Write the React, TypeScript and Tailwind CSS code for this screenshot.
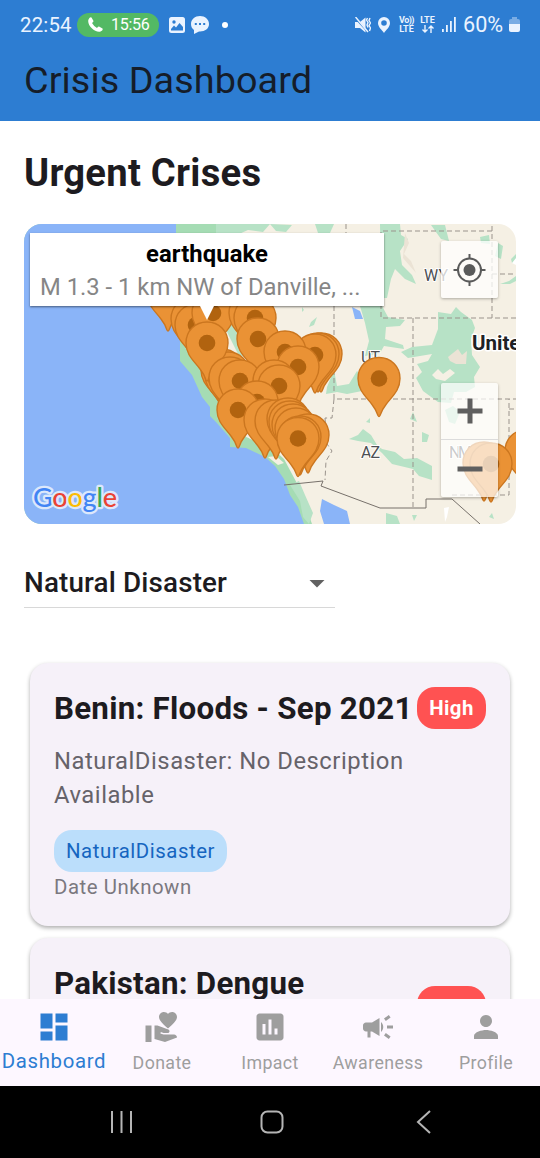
import type { ReactNode } from "react";
import {
  MdArrowDropDown,
  MdCampaign,
  MdDashboard,
  MdInsertChart,
  MdPerson,
  MdVolunteerActivism,
} from "react-icons/md";

const GREEN = "#b7e2c6";

const californiaPins: [number, number][] = [
  [168, 292],
  [192, 318],
  [196, 324],
  [213, 312],
  [250, 312],
  [255, 317],
  [258, 338],
  [321, 353],
  [318, 353],
  [315, 354],
  [285, 351],
  [298, 366],
  [222, 369],
  [226, 374],
  [228, 372],
  [207, 342],
  [230, 377],
  [240, 380],
  [274, 380],
  [279, 385],
  [257, 401],
  [238, 409],
  [265, 419],
  [276, 420],
  [288, 418],
  [290, 421],
  [293, 424],
  [296, 428],
  [308, 434],
  [300, 436],
  [298, 437.5],
];

const newMexicoPins: [number, number][] = [
  [526, 450],
  [484, 462],
  [491, 463],
];

function Pin({ x, y }: { x: number; y: number }) {
  return (
    <g transform={`translate(${x} ${y})`}>
      <path
        d="M0-21C-12-21-21-12-21 0C-21 12-13 18-7 26C-3 31-2 34-1 37Q0 39 1 37C2 34 3 31 7 26C13 18 21 12 21 0C21-12 12-21 0-21Z"
        fill="#ea9235"
        stroke="#cb761f"
        strokeWidth="1.4"
      />
      <circle r="8.3" fill="#b1630f" />
    </g>
  );
}

function MapCanvas() {
  return (
    <svg viewBox="24 223 492 300" className="block h-[300px] w-[492px]" fontFamily="Roboto, sans-serif">
      <rect x="24" y="223" width="492" height="300" fill="#f5f0e4" />
      {/* ocean and coast */}
      <path d="M24 223H216V300L206 330L218 370L230 410L246 436L270 445L284 458L300 488L312 523H24Z" fill="#a5dcb4" />
      <path d="M24 223H176V305L173 326L180 337V360L192 374L202 396L210 406V415L216 421L230 437V446L246 447L265 456L275 465L284 478L290 494L298 506L304 523H24Z" fill="#8ab4f8" />
      <path d="M299 480L305 494L313 512L309 523L303 516L300 500L290 484Z" fill={GREEN} />
      <path d="M322 498L334 504L347 510L350 523H324L320 510Z" fill="#8ab4f8" />
      <path d="M352 306L360 310L363 318L355 318Z" fill="#8ab4f8" />
      <path d="M244 430L250 438L258 440L256 432ZM268 456L276 455L284 462L278 464Z" fill="#f5f0e4" />
      {/* forests */}
      <g fill={GREEN}>
        <path d="M216 223H270L263 231L248 229L239 233H216Z" />
        <path d="M270 223L292 224L286 231L276 230Z" />
        <path d="M315 223H334L330 232H318Z" />
        <path d="M380 223H400L401 234L408 238L400 250L402 264L412 274L416 283L405 278L395 268L391 278L387 297H381Z" />
        <path d="M360 305H382L388 316L399 318L405 319L400 325L386 326L385 338L403 344L404 348L384 345L380 352L365 355L369 340L365 322Z" />
        <path d="M226 315L236 326L240 341L246 357L238 353L229 335L222 320Z" />
        <path d="M311 321L317 316L314 324L309 326ZM302 306L304 309L302 311Z" />
        <path d="M334 369L337 385L349 383L357 370L366 379L362 390L347 393L337 391L326 393L327 386Z" />
        <path d="M401 351L412 346L432 344L438 328L438 311L451 313L456 306L461 311L472 319L475 327L471 338L472 354L480 366L474 376L475 386L466 391L454 391L451 402L438 401L423 390L416 377L422 371L417 363L428 360L432 353L408 357Z" />
        <path d="M431 224H445L449 240L441 238ZM480 236L489 234L490 243L481 242ZM498 242L503 245L501 258L495 255Z" />
        <path d="M516 253L511 258L512 262L516 262ZM516 275L509 280L500 283L510 283L516 280Z" />
        <path d="M349 438L358 434L363 428L371 434L377 444L382 448L395 451L404 458L417 457L432 465V479L419 475L413 468L392 463L382 452L371 442L358 440Z" />
        <path d="M422 431L429 434L427 441H422ZM410 418L413 411L417 421ZM366 421L370 417L370 422ZM386 512L397 515L400 523H386ZM412 514H417L414 520ZM489 516L492 512L494 518Z" />
        <path d="M445 409L453 405L460 411L455 423L449 421Z" />
      </g>
      <path d="M448 356L458 348L462 354L467 350L466 363L456 363L450 360ZM405 232L409 242L404 253L411 260L416 272L403 257Z" fill="#ebe3d5" />
      <path d="M432 374L438 368L443 373L450 368L455 372L445 380L436 378Z" fill="#f5f0e4" />
      <path d="M444 507L449 506L447 516L445 521ZM512 262L516 257V264Z" fill="#fff" />
      {/* state lines */}
      <g fill="none" stroke="#9a938c" strokeWidth="1" strokeDasharray="5 3">
        <path d="M334 305V398H516" />
        <path d="M334 398L332 417H325M325 417L327 443L332 450L326 460L325 479" />
        <path d="M413 317V507M516 317H381V230H492V317M492 225V230M492 273H516M452 494H509V398M509 408H516M346 223V232" />
      </g>
      <path d="M284 484L323 480L321 485L380 507H426V498H452L480 523" fill="none" stroke="#77716b" strokeWidth="1" />
      {/* labels */}
      <g fill="#4d4f53" fontSize="16" stroke="#fff" strokeWidth="2" paintOrder="stroke" strokeLinejoin="round">
        <text x="424" y="279.5" textLength="24">WY</text>
        <text x="361" y="361.5" textLength="19">UT</text>
        <text x="361" y="456.5" textLength="19">AZ</text>
        <text x="449" y="456.5" textLength="23">NM</text>
        <text x="472" y="349" fontSize="20.5" fontWeight="700" fill="#202124" strokeWidth="3">Unite</text>
      </g>
      {californiaPins.map(([x, y], i) => (
        <Pin key={i} x={x} y={y} />
      ))}
      <Pin x={379} y={377.5} />
      {newMexicoPins.map(([x, y], i) => (
        <Pin key={i} x={x} y={y} />
      ))}
      <text x="33" y="505.5" fontFamily="Lato, sans-serif" fontSize="27" fontWeight="500" textLength="84" stroke="#dce8fb" strokeWidth="4.5" strokeLinejoin="round" paintOrder="stroke">
        <tspan fill="#4285f4">G</tspan>
        <tspan fill="#ea4335">o</tspan>
        <tspan fill="#fbbc05">o</tspan>
        <tspan fill="#4285f4">g</tspan>
        <tspan fill="#34a853">l</tspan>
        <tspan fill="#ea4335">e</tspan>
      </text>
    </svg>
  );
}

function CrisisMap() {
  return (
    <section className="relative mt-[26.5px] h-[300px] w-[492px] shrink-0 overflow-hidden rounded-[18px]">
      <MapCanvas />
      <div className="absolute left-[6px] top-[9.5px] flex h-[73px] w-[354px] flex-col items-center bg-white pt-[5px] shadow-[0_1px_2px_rgba(0,0,0,0.5)]">
        <p className="text-[23.8px] font-bold leading-[32px] tracking-[0.1px] text-black">earthquake</p>
        <p className="w-[334px] whitespace-nowrap text-[23.8px] leading-[34px] text-[#868686]">M 1.3 - 1 km NW of Danville, ...</p>
      </div>
      <svg viewBox="0 0 14 14" className="absolute left-[176px] top-[82.5px] h-[14px] w-[14px]">
        <path d="M0 0H14L7 14Z" fill="#fff" />
      </svg>
      <button className="absolute left-[417px] top-[17.5px] flex h-[57px] w-[57px] items-center justify-center rounded-[2px] bg-white/75 text-[#5a5a5a] shadow-[0_1px_3px_rgba(0,0,0,0.3)]">
        <svg viewBox="0 0 34 34" className="size-[34px]" fill="none" stroke="currentColor" strokeWidth="2">
          <circle cx="16.5" cy="17" r="11.5" />
          <circle cx="16.5" cy="17" r="6" fill="currentColor" stroke="none" />
          <path d="M16.5 1V6M16.5 28V33M0.500 17H5.500M27.500 17H32.500" />
        </svg>
      </button>
      <div className="absolute left-[417px] top-[159.5px] flex h-[114px] w-[57px] flex-col rounded-[2px] bg-white/70 text-[#5f5f5f] shadow-[0_1px_3px_rgba(0,0,0,0.3)]">
        <button className="flex h-[57px] items-center justify-center border-b border-[#dcdcdc]">
          <svg viewBox="0 0 26 26" className="size-[26px]">
            <path d="M13 0.5V25.5M0.5 13H25.5" stroke="currentColor" strokeWidth="5" />
          </svg>
        </button>
        <button className="flex h-[57px] items-center justify-center">
          <svg viewBox="0 0 26 26" className="size-[26px]">
            <path d="M0.5 13H25.5" stroke="currentColor" strokeWidth="5" />
          </svg>
        </button>
      </div>
    </section>
  );
}

function StatusBar() {
  return (
    <div className="flex h-[50px] items-center justify-between pl-[20px] pr-[20px] text-[#eaf3ff]">
      <div className="flex items-center">
        <span className="w-[57px] text-[20.4px] tracking-[0.2px]">22:54</span>
        <span className="flex h-[24px] w-[82px] items-center rounded-full bg-[#53b964] pl-[11px] text-white">
          <svg viewBox="0 0 15 15" className="size-[15px]" fill="currentColor">
            <path d="M0.500 2.500Q2-.5 3.500.5L5.500 4Q5.500 5 4 6Q6 9.500 9 11Q10 9.200 11 9.500L14.500 11.500Q15.500 13 12.500 14.500C7 16-1.500 8 0.500 2.500Z" />
          </svg>
          <span className="ml-[8px] text-[16px] tracking-[-0.25px]">15:56</span>
        </span>
        <svg viewBox="0 0 16 16" className="ml-[10px] size-[16px]">
          <rect width="16" height="16" rx="2.5" fill="currentColor" />
          <circle cx="5" cy="5" r="1.7" fill="#2d7dd2" />
          <path d="M2 12L5 8.5L7 10.5L10.5 6L14 10V13.5H2Z" fill="#2d7dd2" />
        </svg>
        <svg viewBox="0 0 18 18" className="ml-[6px] size-[18px]">
          <path d="M9 0C14 0 18 3.4 18 8S14 15.5 9 15.5H8L3 18V14C1 12.500 0 10.500 0 8C0 3.400 4 0 9 0Z" fill="currentColor" />
          <path d="M3.800 8h2M8 8h2M12.200 8h2" stroke="#2d7dd2" strokeWidth="2" />
        </svg>
        <span className="ml-[13px] size-[6px] rounded-full bg-white" />
      </div>
      <div className="flex items-center">
        <svg viewBox="0 0 16 16" className="size-[16px]" fill="currentColor">
          <path d="M0 5H5L10.500 0.500V15.500L5 11H0Z" />
          <path d="M0 1L12 14" stroke="#2d7dd2" strokeWidth="1.500" />
          <path d="M0.500 0L13 15" fill="none" stroke="currentColor" strokeWidth="1.500" />
          <path d="M12.500 1L11.500 3L13 5.500L12 8L13 10.500M15 1L14 3.500L15.500 6L14 8.500L15.500 11L14.500 14" fill="none" stroke="currentColor" strokeWidth="1.400" />
        </svg>
        <svg viewBox="0 0 12 16" className="ml-[7px] h-[16px] w-[12px]">
          <path d="M6 0A6 6 0 0 1 12 6C12 10 8 13 6 16C4 13 0 10 0 6A6 6 0 0 1 6 0ZM6 3.200A2.800 2.800 0 1 0 6 8.800A2.800 2.800 0 1 0 6 3.200Z" fill="currentColor" fillRule="evenodd" />
        </svg>
        <span className="ml-[8px] flex w-[17px] flex-col items-center text-[9px] font-bold leading-[9px]">
          <span className="whitespace-nowrap tracking-[-0.5px]">Vo))</span>
          <span>LTE</span>
        </span>
        <span className="ml-[4px] flex w-[17px] flex-col items-center text-[9px] font-bold leading-[9px]">
          <span>LTE</span>
          <svg viewBox="0 0 12 8" className="h-[8px] w-[12px]" fill="none" stroke="currentColor" strokeWidth="1.400">
            <path d="M3 0V7M0.500 4.500L3 7L5.500 4.500M9 8V1M6.500 3.500L9 1L11.500 3.500" />
          </svg>
        </span>
        <svg viewBox="0 0 15 15" className="ml-[6px] h-[15px] w-[15px]" fill="currentColor">
          <path d="M0 12H1.800V15H0ZM4 8H5.800V15H4ZM8 4H9.800V15H8ZM12 0H13.800V15H12Z" />
        </svg>
        <span className="ml-[6px] w-[46px] whitespace-nowrap text-[21.6px]">60%</span>
        <svg viewBox="0 0 11 15" className="h-[15px] w-[11px]" fill="currentColor">
          <path d="M3 0H8V2H9Q11 2 11 4V7H0V4Q0 2 2 2H3Z" opacity="0.4" />
          <path d="M0 7H11V13Q11 15 9 15H2Q0 15 0 13Z" />
        </svg>
      </div>
    </div>
  );
}

function CrisisCard({ title, badgeClass, children }: { title: string; badgeClass: string; children?: ReactNode }) {
  return (
    <article className="mx-[6px] h-[263.5px] shrink-0 rounded-[18px] bg-[#f6f1f9] px-[24px] pt-[24px] shadow-[0_2px_4px_rgba(0,0,0,0.32)]">
      <div className="flex items-start justify-between">
        <h2 className="whitespace-nowrap text-[31.3px] font-bold leading-[43px] tracking-[0.25px] text-[#1d1b20]">{title}</h2>
        <span className={`-ml-[10px] flex h-[42px] w-[69px] items-center justify-center rounded-[18px] bg-[#ff5252] text-[20.4px] font-bold tracking-[0.4px] text-white ${badgeClass}`}>
          High
        </span>
      </div>
      {children}
    </article>
  );
}

const tabs = [
  { label: "Donate", Icon: MdVolunteerActivism },
  { label: "Impact", Icon: MdInsertChart },
  { label: "Awareness", Icon: MdCampaign },
  { label: "Profile", Icon: MdPerson },
];

export default function App() {
  return (
    <div className="flex h-[1158px] w-[540px] flex-col overflow-hidden bg-white font-['Roboto',sans-serif]">
      <header className="h-[121px] shrink-0 bg-[#2d7dd2]">
        <StatusBar />
        <h1 className="pl-[24px] text-[37.8px] leading-[60px] tracking-[0.07px] text-[#151d2a]">Crisis Dashboard</h1>
      </header>
      <main className="flex min-h-0 flex-1 flex-col overflow-hidden px-[24px]">
        <h2 className="mt-[28px] text-[38.2px] font-bold leading-[48px] tracking-[0.25px] text-[#1d1b20]">Urgent Crises</h2>
        <CrisisMap />
        <div className="mt-[35.5px] flex h-[49px] w-[311px] shrink-0 items-center justify-between border-b border-[#d8d8d8]">
          <span className="text-[27.8px] font-medium tracking-[0.16px] text-[#1d1b20]">Natural Disaster</span>
          <MdArrowDropDown className="size-[36px] text-[#616161]" />
        </div>
        <div className="-mx-[24px] mt-[46.5px] flex min-h-0 flex-1 flex-col gap-[12px] overflow-hidden px-[24px] pt-[8px]">
          <CrisisCard title="Benin: Floods - Sep 2021" badgeClass="mt-[0.5px]">
            <p className="mt-[14px] text-[23.8px] leading-[34px] tracking-[0.53px] text-[#66636a]">
              NaturalDisaster: No Description
              <br />
              Available
            </p>
            <span className="mt-[18px] flex h-[42px] w-[173px] items-center justify-center rounded-[18px] bg-[#bbdefb] pt-[1px] text-[20.4px] tracking-[0.54px] text-[#1565c0]">
              NaturalDisaster
            </span>
            <p className="mt-[0.5px] text-[20.4px] leading-[30px] tracking-[0.54px] text-[#7b787f]">Date Unknown</p>
          </CrisisCard>
          <CrisisCard title="Pakistan: Dengue" badgeClass="mt-[23.5px] pt-[8px]" />
        </div>
      </main>
      <nav className="grid h-[87px] shrink-0 grid-cols-5 bg-[#fdf7ff]">
        <div className="flex flex-col items-center pt-[10px] text-[#2d7dd2]">
          <MdDashboard className="size-[36px]" />
          <span className="mt-[1px] text-[20.4px] leading-[30px] tracking-[0.65px]">Dashboard</span>
        </div>
        {tabs.map(({ label, Icon }) => (
          <div key={label} className="flex flex-col items-center pt-[10px] text-[#9e9e9e]">
            <Icon className="size-[36px]" />
            <span className="mt-[5px] text-[17.8px] leading-[26px] tracking-[0.38px]">{label}</span>
          </div>
        ))}
      </nav>
      <footer className="flex h-[72px] shrink-0 items-center bg-black pl-[109px] text-[#b5b5b5]">
        <svg viewBox="0 0 24 24" className="size-[24px]" fill="none" stroke="currentColor" strokeWidth="2">
          <path d="M3 1V23M12.500 1V23M22 1V23" />
        </svg>
        <svg viewBox="0 0 24 24" className="ml-[127px] size-[24px]" fill="none" stroke="currentColor" strokeWidth="2">
          <rect x="1.500" y="1.500" width="21" height="21" rx="6" />
        </svg>
        <svg viewBox="0 0 16 24" className="ml-[132px] h-[24px] w-[16px]" fill="none" stroke="currentColor" strokeWidth="2">
          <path d="M14 1L2 12L14 23" />
        </svg>
      </footer>
    </div>
  );
}
